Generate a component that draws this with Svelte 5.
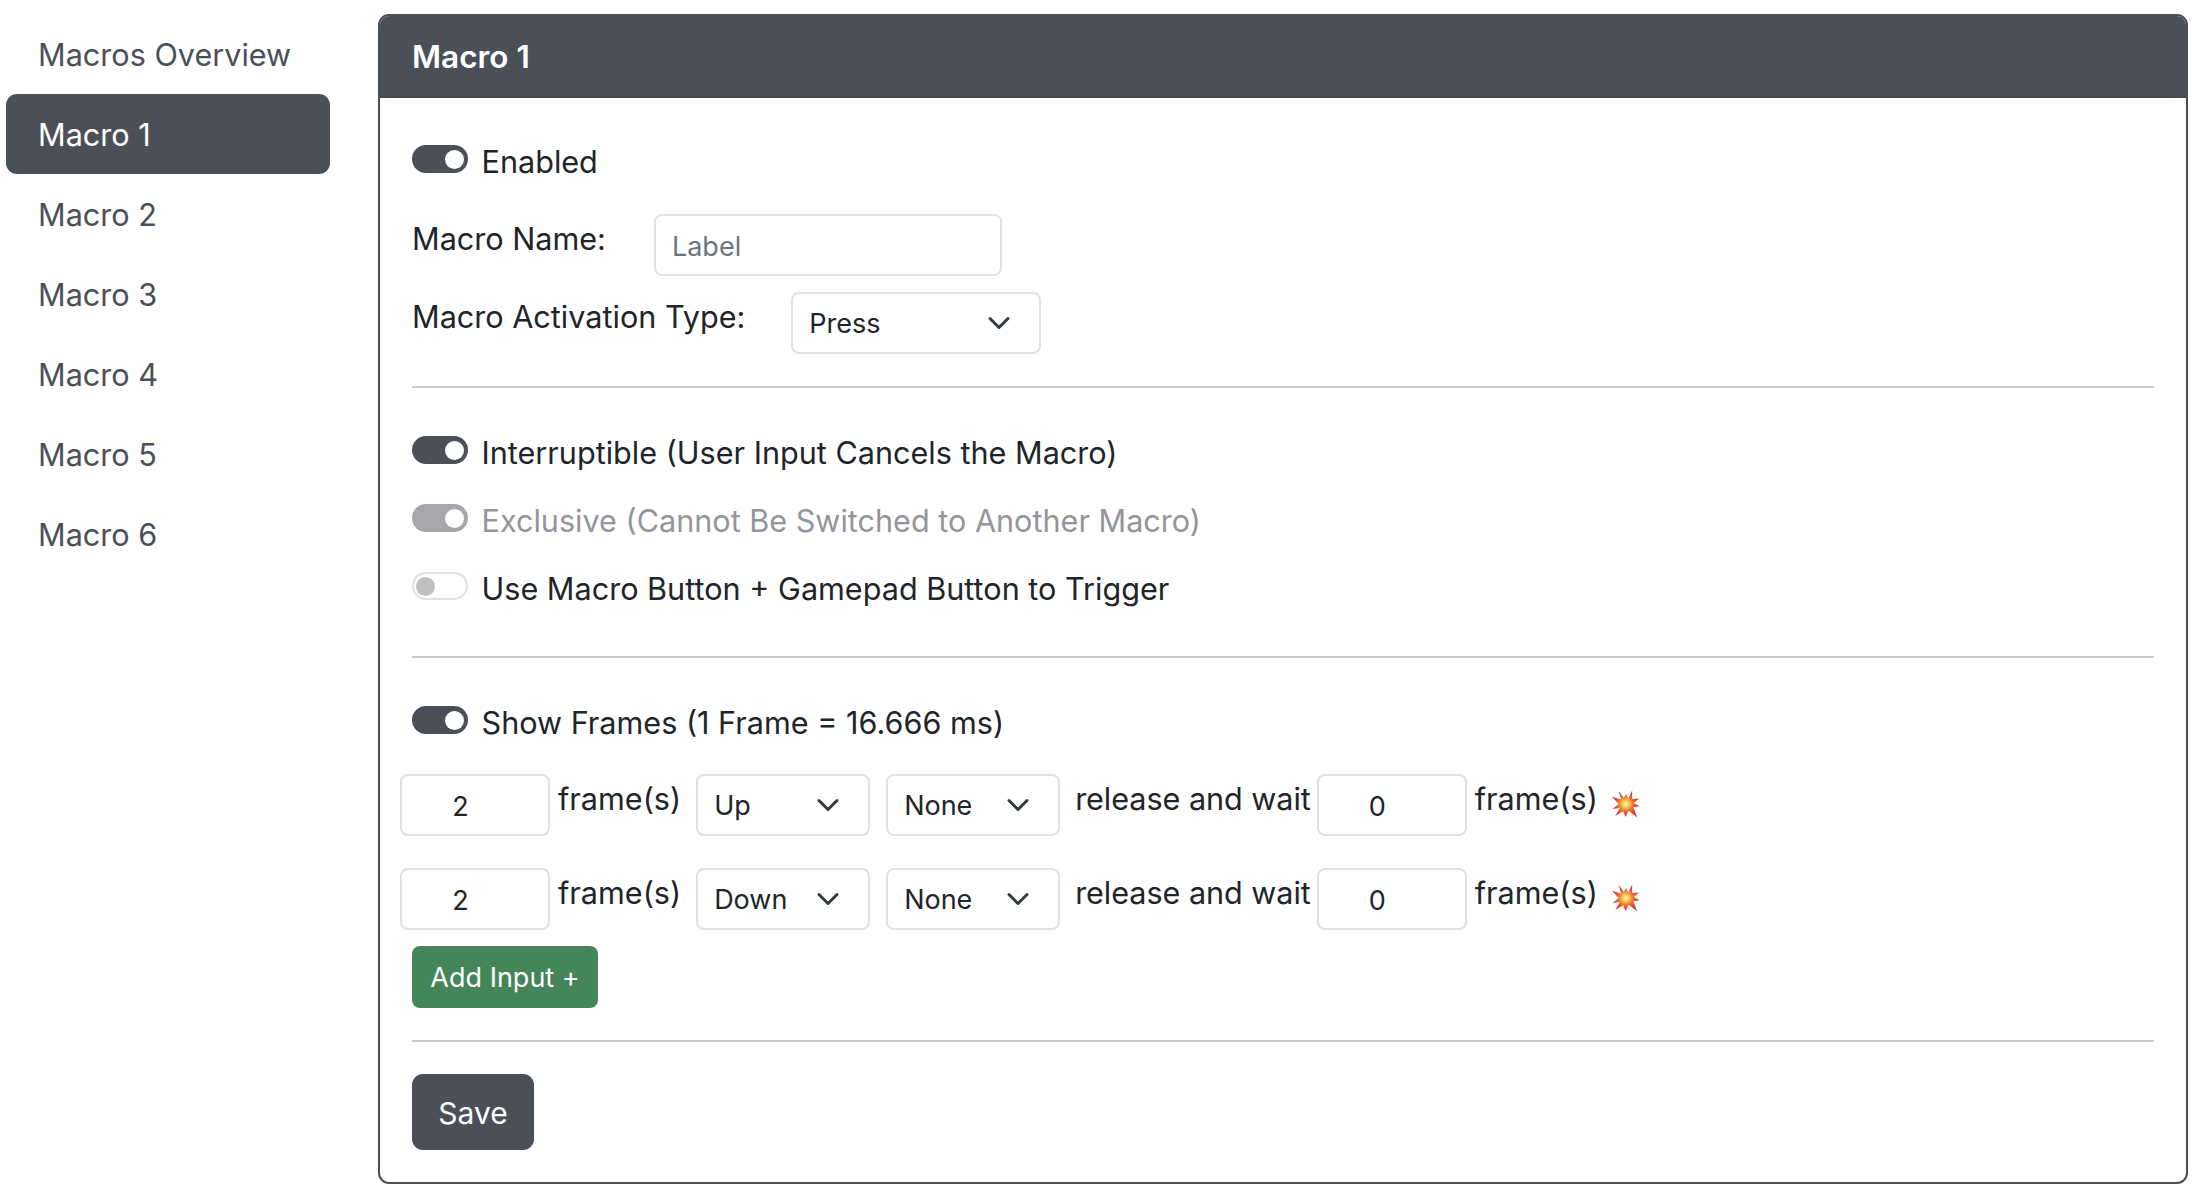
<script lang="ts">
	const macros = ['Macro 1', 'Macro 2', 'Macro 3', 'Macro 4', 'Macro 5', 'Macro 6'];
	const options = [
		{ label: 'Interruptible (User Input Cancels the Macro)', on: true, disabled: false },
		{ label: 'Exclusive (Cannot Be Switched to Another Macro)', on: true, disabled: true },
		{ label: 'Use Macro Button + Gamepad Button to Trigger', on: false, disabled: false }
	];
	const inputs = [
		{ frames: 2, dir: 'Up', extra: 'None', wait: 0 },
		{ frames: 2, dir: 'Down', extra: 'None', wait: 0 }
	];
	const spikes = [
		[50, 14], [58, 30], [72, 2], [72, 32], [96, 30], [78, 46], [98, 58], [76, 62], [90, 98],
		[60, 74], [48, 96], [40, 76], [12, 92], [28, 64], [2, 68], [24, 50], [0, 24], [32, 34], [24, 4], [42, 28]
	];
	const burst = spikes.map((p) => p.join(',')).join(' ');
</script>

{#snippet toggle(on: boolean, disabled: boolean, label: string)}
	<label class="check" class:disabled>
		<span class="switch" class:on></span>
		<span>{label}</span>
	</label>
{/snippet}

<div class="page">
	<nav class="sidebar">
		<a class="nav-link" href="#overview">Macros Overview</a>
		{#each macros as macro, i}
			<a class="nav-link" class:active={i === 0} href="#macro">{macro}</a>
		{/each}
	</nav>

	<section class="card">
		<header class="card-header">Macro 1</header>
		<div class="card-body">
			{@render toggle(true, false, 'Enabled')}

			<div class="field name-field">
				<span class="field-label">Macro Name:</span>
				<input class="control name-input" type="text" placeholder="Label" />
			</div>
			<div class="field type-field">
				<span class="field-label">Macro Activation Type:</span>
				<select class="control type-select"><option>Press</option></select>
			</div>

			<hr class="first-rule" />

			<div class="options">
				{#each options as opt}
					{@render toggle(opt.on, opt.disabled, opt.label)}
				{/each}
			</div>

			<hr class="second-rule" />

			{@render toggle(true, false, 'Show Frames (1 Frame = 16.666 ms)')}

			<div class="inputs">
				{#each inputs as row}
					<div class="input-row">
						<input class="control frames" type="text" value={row.frames} />
						<span class="row-text">frame(s)</span>
						<select class="control dir"><option>{row.dir}</option></select>
						<select class="control extra"><option>{row.extra}</option></select>
						<span class="row-text release">release and wait</span>
						<input class="control frames" type="text" value={row.wait} />
						<span class="row-text">frame(s)</span>
						<svg class="burst" viewBox="0 0 100 100" aria-hidden="true">
							<defs>
								<radialGradient id="blast">
									<stop offset="0" stop-color="#fffbd0" />
									<stop offset="0.22" stop-color="#fcd04f" />
									<stop offset="0.5" stop-color="#ec7a3c" />
									<stop offset="0.85" stop-color="#d63c2c" />
								</radialGradient>
							</defs>
							<polygon points={burst} fill="url(#blast)" />
						</svg>
					</div>
				{/each}
			</div>

			<button class="btn add">Add Input +</button>
			<hr class="third-rule" />
			<button class="btn save">Save</button>
		</div>
	</section>
</div>

<style>
	:global(body) {
		margin: 0;
		background: #fff;
		color: #212529;
		font-family: Inter, 'Liberation Sans', sans-serif;
		font-size: 30.6px;
		line-height: 34px;
	}

	.page {
		display: flex;
		align-items: flex-start;
		gap: 48px;
		padding: 14px 8px 0 6px;
	}

	.sidebar {
		flex: 0 0 324px;
		display: flex;
		flex-direction: column;
	}

	.nav-link {
		display: flex;
		align-items: center;
		height: 80px;
		box-sizing: border-box;
		padding: 2px 0 0 32px;
		border-radius: 11px;
		color: #4b5058;
		text-decoration: none;
	}

	.nav-link.active {
		background: #4b5058;
		color: #fff;
	}

	.card {
		flex: 1;
		height: 1170px;
		box-sizing: border-box;
		border: 2px solid #4b5058;
		border-radius: 11px;
		overflow: hidden;
	}

	.card-header {
		height: 82px;
		box-sizing: border-box;
		padding: 2px 0 0 32px;
		display: flex;
		align-items: center;
		background: #4b5058;
		border-bottom: 2px solid #43474e;
		color: #fff;
		font-size: 31.5px;
		font-weight: 600;
	}

	.card-body {
		padding: 47px 32px 0;
	}

	.check {
		display: flex;
		align-items: flex-start;
		gap: 13.5px;
		height: 34px;
	}

	.check.disabled {
		color: #93959a;
	}

	.switch {
		position: relative;
		flex: none;
		width: 56px;
		height: 28px;
		box-sizing: border-box;
		border: 2px solid #dee2e6;
		border-radius: 14px;
		background: #fff;
	}

	.switch::after {
		content: '';
		position: absolute;
		top: 2.5px;
		left: 2px;
		width: 19px;
		height: 19px;
		border-radius: 50%;
		background: #bfbfbf;
	}

	.switch.on {
		background: #4b5058;
		border-color: #4b5058;
	}

	.switch.on::after {
		left: auto;
		right: 2px;
		background: #fff;
	}

	.disabled .switch.on {
		background: #a5a7ab;
		border-color: #a5a7ab;
	}

	.field {
		display: flex;
		align-items: flex-start;
	}

	.name-field {
		gap: 48px;
		margin-top: 35px;
	}

	.type-field {
		gap: 46px;
		margin-top: 16px;
	}

	.field-label {
		margin-top: 8px;
	}

	.control {
		height: 62px;
		box-sizing: border-box;
		padding: 2px 16px 0;
		border: 2px solid #dee2e6;
		border-radius: 8px;
		background-color: #fff;
		color: #212529;
		font: inherit;
		font-size: 27px;
		outline: none;
		appearance: none;
	}

	.control::placeholder {
		color: #6c757d;
		opacity: 1;
	}

	select.control {
		background-image: url("data:image/svg+xml,%3csvg xmlns='http://www.w3.org/2000/svg' viewBox='0 0 16 16'%3e%3cpath fill='none' stroke='%23343a40' stroke-linecap='round' stroke-linejoin='round' stroke-width='2' d='m2 5 6 6 6-6'/%3e%3c/svg%3e");
		background-repeat: no-repeat;
		background-position: right 28px center;
		background-size: 24px 24px;
	}

	.name-input {
		width: 348px;
	}

	.type-select {
		width: 250px;
	}

	hr {
		margin: 0;
		border: none;
		border-top: 2px solid #c9c9c9;
	}

	.first-rule {
		margin-top: 32px;
	}

	.options {
		display: flex;
		flex-direction: column;
		gap: 34px;
		margin-top: 48px;
	}

	.second-rule {
		margin-top: 50px;
		margin-bottom: 48px;
	}

	.inputs {
		display: flex;
		flex-direction: column;
		gap: 32px;
		margin: 34px 0 16px -12px;
	}

	.input-row {
		display: flex;
		align-items: flex-start;
	}

	.frames {
		width: 150px;
		padding-right: 45px;
		text-align: center;
	}

	.row-text {
		margin: 8px 15px 0 8px;
	}

	.dir,
	.extra {
		width: 174px;
	}

	.extra {
		margin-left: 16px;
	}

	.release {
		margin-right: 6px;
		margin-left: 15px;
		letter-spacing: -0.05px;
	}

	.burst {
		width: 28px;
		height: 28px;
		margin-top: 16px;
		margin-left: -1px;
	}

	.btn {
		display: block;
		padding: 2px 0 0;
		border: none;
		color: #fff;
		font: inherit;
		cursor: pointer;
	}

	.add {
		width: 186px;
		height: 62px;
		border-radius: 8px;
		background: #448659;
		font-size: 27px;
	}

	.third-rule {
		margin: 32px 0;
	}

	.save {
		width: 122px;
		height: 76px;
		border-radius: 11px;
		background: #4b5058;
		font-size: 30px;
	}
</style>
